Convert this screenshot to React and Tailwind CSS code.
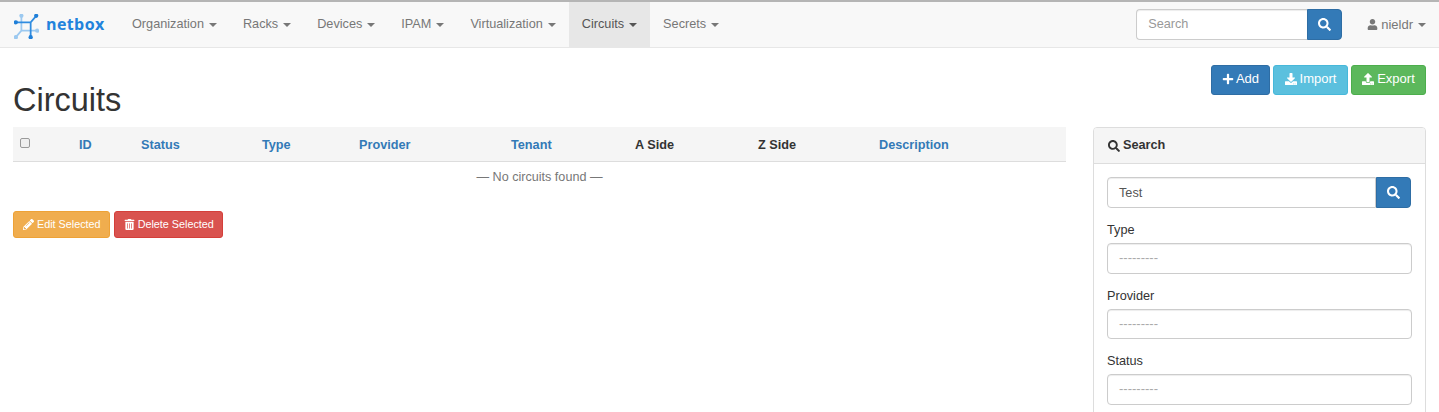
import React from "react";
import { FaSearch, FaPlus, FaDownload, FaUpload, FaPencilAlt, FaTrashAlt, FaUser } from "react-icons/fa";

const Caret = ({ cls = "border-t-[#777777]" }) => (
  <span className={`inline-block ml-[5px] align-middle w-0 h-0 border-t-[4px] border-x-[4px] border-x-transparent ${cls}`} />
);

const navItems = ["Organization", "Racks", "Devices", "IPAM", "Virtualization", "Circuits", "Secrets"];

const Logo = () => (
  <svg width="25" height="25" viewBox="1 1 27 27" className="shrink-0 mt-[3px]">
    <g fill="none" strokeWidth="1.9">
      <path d="M9 3 L9 19 L26 19 M9 19 L3 26" stroke="#9cc9f0" />
      <path d="M3 10 L19 10 L25 3 M19 10 L19 26" stroke="#2f8ce0" />
    </g>
    <g fill="#9cc9f0">
      <circle cx="9" cy="3" r="2.3" />
      <circle cx="26" cy="19" r="2.3" />
      <circle cx="3" cy="26" r="2.3" />
    </g>
    <g fill="#1f7fd8">
      <circle cx="3" cy="10" r="2.3" />
      <circle cx="25" cy="3" r="2.3" />
      <circle cx="19" cy="26" r="2.3" />
    </g>
  </svg>
);

const Field = ({ label, className = "" }) => (
  <div className={className}>
    <div className="text-[12.7px] leading-[22px] text-[#333333] mb-[2px]">{label}</div>
    <div className="h-[30.5px] border border-[#cccccc] rounded-[4px] px-[11px] text-[13px] leading-[28px] text-[#aaaaaa] shadow-[inset_0_1px_1px_rgba(0,0,0,0.075)]">---------</div>
  </div>
);

const columns = [
  ["", "w-[58px]"],
  ["ID", "w-[62px]", true],
  ["Status", "w-[121px]", true],
  ["Type", "w-[97px]", true],
  ["Provider", "w-[152px]", true],
  ["Tenant", "w-[124px]", true],
  ["A Side", "w-[123px]"],
  ["Z Side", "w-[121px]"],
  ["Description", "w-[195px]", true],
];

export default function App() {
  return (
    <div className="h-[412px] w-[1439px] overflow-hidden bg-white text-[12.7px] text-[#333333] font-['Liberation_Sans',Arial,sans-serif]">
      <nav className="h-[48px] bg-[#f8f8f8] border-t-2 border-t-[#b5b5b5] border-b border-b-[#e7e7e7] flex items-stretch">
        <div className="flex items-center gap-[7px] pl-[14px] w-[119px] shrink-0">
          <Logo />
          <span className="font-['Open_Sans',sans-serif] font-bold text-[16px] text-[#2283dc] tracking-[0.4px] mt-[-2px]">netbox</span>
        </div>
        {navItems.map((n) => (
          <div
            key={n}
            className={`flex items-center px-[13px] ${n === "Circuits" ? "bg-[#e7e7e7] text-[#555555]" : "text-[#777777]"}`}
          >
            <span>{n}</span>
            <Caret cls={n === "Circuits" ? "border-t-[#555555]" : "border-t-[#777777]"} />
          </div>
        ))}
        <div className="ml-auto flex items-center pr-[13px]">
          <div className="flex w-[206px] h-[31px] mt-[-1px]">
            <div className="flex-1 border border-[#cccccc] border-r-0 rounded-l-[4px] bg-white pl-[11px] leading-[28px] text-[#999999] shadow-[inset_0_1px_1px_rgba(0,0,0,0.075)]">Search</div>
            <div className="w-[35px] bg-[#337ab7] border border-[#2e6da4] rounded-r-[4px] flex items-center justify-center text-white text-[13px]"><FaSearch /></div>
          </div>
          <div className="ml-[25px] flex items-center text-[#777777]">
            <FaUser className="text-[11px] mr-[3px]" />
            <span className="text-[13px]">nieldr</span>
            <Caret />
          </div>
        </div>
      </nav>

      <div className="px-[13px] flex">
        <div className="w-[1053px] shrink-0">
          <h1 className="text-[32.5px] leading-[36px] font-normal text-[#333333] mt-[34px] mb-[9px]">Circuits</h1>
          <table className="table-fixed border-collapse w-full">
            <thead>
              <tr className="bg-[#f5f5f5] border-b border-b-[#dddddd] h-[34px]">
                {columns.map(([t, w, link], i) => (
                  <th key={i} className={`${w} px-[8px] pt-[3px] text-left font-bold text-[12.7px] ${link ? "text-[#337ab7]" : "text-[#333333]"}`}>
                    {i === 0 ? (
                      <span className="block w-[10px] h-[10px] mt-[-4px] ml-[-1px] border border-[#9a9a9a] rounded-[2px] bg-[#efefef]" />
                    ) : t}
                  </th>
                ))}
              </tr>
            </thead>
            <tbody>
              <tr>
                <td colSpan={9} className="text-center text-[#777777] text-[12.6px] h-[30px] pt-[2px]">— No circuits found —</td>
              </tr>
            </tbody>
          </table>
          <div className="flex gap-[4px] mt-[20px]">
            <div className="h-[27px] flex items-center gap-[3px] pl-[9px] pr-[8px] bg-[#f0ad4e] border border-[#eea236] rounded-[3px] text-white text-[10.8px]">
              <FaPencilAlt className="text-[11px]" /><span>Edit Selected</span>
            </div>
            <div className="h-[27px] flex items-center gap-[3px] pl-[9px] pr-[8px] bg-[#d9534f] border border-[#d43f3a] rounded-[3px] text-white text-[10.8px]">
              <FaTrashAlt className="text-[11px]" /><span>Delete Selected</span>
            </div>
          </div>
        </div>

        <div className="ml-[27px] w-[333px] shrink-0">
          <div className="flex justify-end gap-[3px] pt-[17px] h-[79px]">
            <div className="w-[59px] h-[30px] flex items-center justify-center gap-[2px] pb-[3px] bg-[#337ab7] border border-[#2e6da4] rounded-[3px] text-white text-[13px]"><FaPlus className="text-[12px]" />Add</div>
            <div className="w-[75px] h-[30px] flex items-center justify-center gap-[3px] pb-[3px] bg-[#5bc0de] border border-[#46b8da] rounded-[3px] text-white text-[13px]"><FaDownload className="text-[12px]" />Import</div>
            <div className="w-[75px] h-[30px] flex items-center justify-center gap-[3px] pb-[3px] bg-[#5cb85c] border border-[#4cae4c] rounded-[3px] text-white text-[13px]"><FaUpload className="text-[12px]" />Export</div>
          </div>
          <div className="border border-[#dddddd] rounded-[4px] h-[300px]">
            <div className="h-[36px] bg-[#f5f5f5] border-b border-b-[#dddddd] rounded-t-[3px] flex items-center px-[14px] font-bold text-[#333333] gap-[3px]">
              <FaSearch className="text-[12px]" /><span className="text-[12.7px]">Search</span>
            </div>
            <div className="px-[13px] pt-[13px]">
              <div className="flex h-[31px] mr-[1px]">
                <div className="flex-1 border border-[#cccccc] rounded-l-[4px] pl-[11px] leading-[30px] text-[#555555] shadow-[inset_0_1px_1px_rgba(0,0,0,0.075)]">Test</div>
                <div className="w-[35px] bg-[#337ab7] border border-[#2e6da4] rounded-r-[4px] flex items-center justify-center text-white text-[13px]"><FaSearch /></div>
              </div>
              <Field label="Type" className="mt-[11px]" />
              <Field label="Provider" className="mt-[11px]" />
              <Field label="Status" className="mt-[11px]" />
            </div>
          </div>
        </div>
      </div>
    </div>
  );
}
